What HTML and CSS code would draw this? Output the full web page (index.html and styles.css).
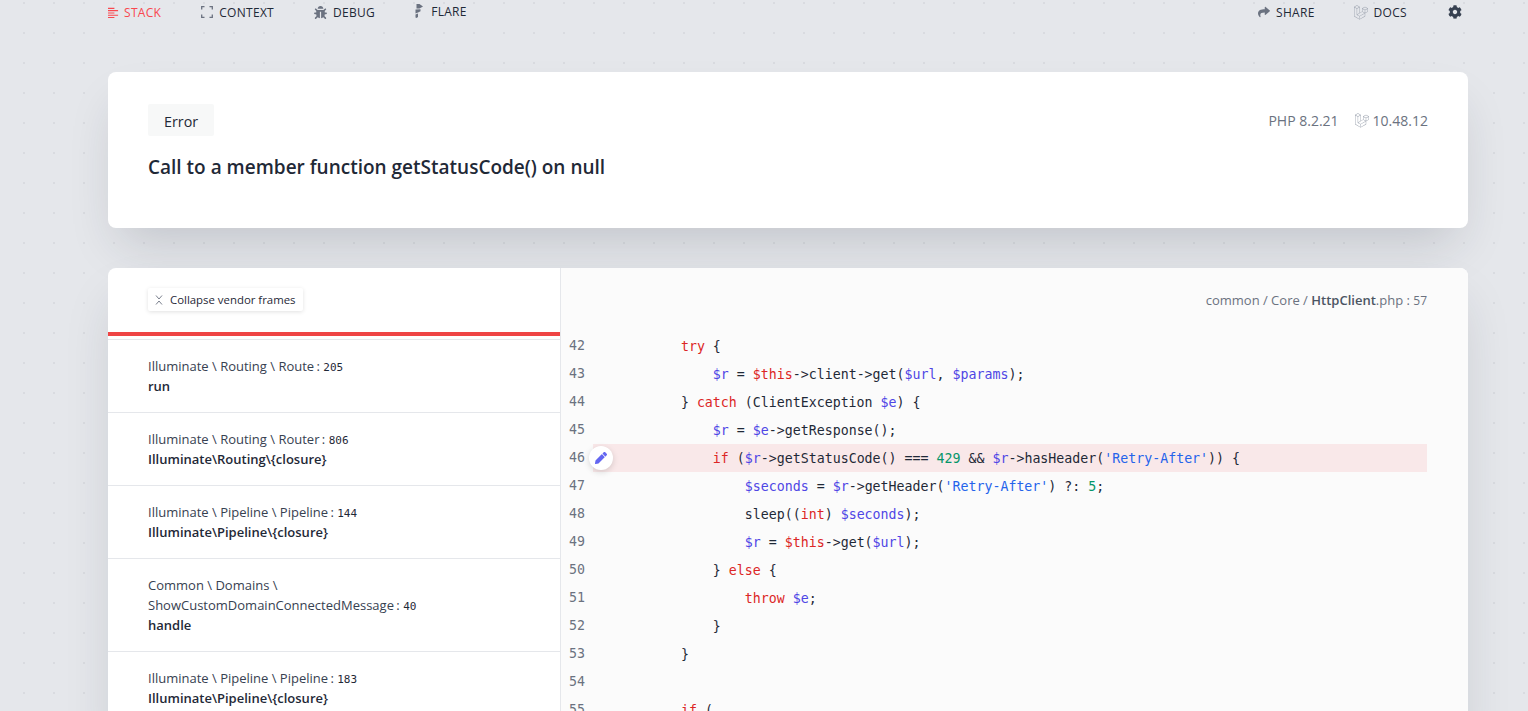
FILE: index.html
```html
<!DOCTYPE html>
<html lang="en">
<head>
<meta charset="utf-8">
<title>Error</title>
<link rel="stylesheet" href="styles.css">
</head>
<body>
<svg class="defs" width="0" height="0" aria-hidden="true"><defs><path id="laravel" fill="currentColor" d="M49.626 11.564a.809.809 0 0 1 .028.209v10.972a.8.8 0 0 1-.402.694l-9.209 5.302V39.25c0 .286-.152.55-.4.694L20.42 51.01c-.044.025-.092.041-.14.058-.018.006-.035.017-.054.022a.805.805 0 0 1-.41 0c-.022-.006-.042-.018-.063-.026-.044-.016-.09-.03-.132-.054L.402 39.944A.801.801 0 0 1 0 39.25V6.334c0-.072.01-.142.028-.21.006-.023.02-.044.028-.067.015-.042.029-.085.051-.124.015-.026.037-.047.055-.071.023-.032.044-.065.071-.093.023-.023.053-.04.079-.06.029-.024.055-.05.088-.069h.001l9.61-5.533a.802.802 0 0 1 .8 0l9.61 5.533h.002c.032.02.059.045.088.068.026.02.055.038.078.06.028.029.048.062.072.094.017.024.04.045.054.071.023.04.036.082.052.124.008.023.022.044.028.068a.809.809 0 0 1 .028.209v20.559l8.008-4.611v-10.51c0-.07.01-.141.028-.208.007-.024.02-.045.028-.068.016-.042.03-.085.052-.124.015-.026.037-.047.054-.071.024-.032.044-.065.072-.093.023-.023.052-.04.078-.06.03-.024.056-.05.088-.069h.001l9.611-5.533a.801.801 0 0 1 .8 0l9.61 5.533c.034.02.06.045.09.068.025.02.054.038.077.06.028.029.048.062.072.094.018.024.04.045.054.071.023.039.036.082.052.124.009.023.022.044.028.068zm-1.574 10.718v-9.124l-3.363 1.936-4.646 2.675v9.124l8.01-4.611zm-9.61 16.505v-9.13l-4.57 2.61-13.05 7.448v9.216l17.62-10.144zM1.602 7.719v31.068L19.22 48.93v-9.214l-9.204-5.209-.003-.002-.004-.002c-.031-.018-.057-.044-.086-.066-.025-.02-.054-.036-.076-.058l-.002-.003c-.026-.025-.044-.056-.066-.084-.02-.027-.044-.05-.06-.078l-.001-.003c-.018-.03-.029-.066-.042-.1-.013-.03-.03-.058-.038-.09v-.001c-.01-.038-.012-.078-.016-.117-.004-.03-.012-.06-.012-.09v-.002-21.481L4.965 9.654 1.602 7.72zm8.81-5.994L2.405 6.334l8.005 4.609 8.006-4.61-8.006-4.608zm4.164 28.764l4.645-2.674V7.719l-3.363 1.936-4.646 2.675v20.096l3.364-1.937zM39.243 7.164l-8.006 4.609 8.006 4.609 8.005-4.61-8.005-4.608zm-.801 10.605l-4.646-2.675-3.363-1.936v9.124l4.645 2.674 3.364 1.937v-9.124zM20.02 38.33l11.743-6.704 5.87-3.35-8-4.606-9.211 5.303-8.395 4.833 7.993 4.524z"/></defs></svg>
<nav class="nav">
  <div class="nav-group">
    <a class="nav-item nav-active"><svg class="ico" viewBox="0 0 12 12"><path d="M0 1.500h7M0 4h11M0 6.500h7M0 9h11M0 11.500h7" stroke="currentColor" stroke-width="1.200" fill="none"/></svg>STACK</a>
    <a class="nav-item"><svg class="ico ico-gray" viewBox="0 0 12 12"><path d="M.7 3.500V.7h2.800M8.500.7h2.800v2.800M11.300 8.500v2.800H8.500M3.500 11.300H.7V8.500" stroke="currentColor" stroke-width="1.300" fill="none"/></svg>CONTEXT</a>
    <a class="nav-item"><svg class="ico ico-gray ico-bug" viewBox="0 0 512 512"><path fill="currentColor" d="M511.988 288.9c-.478 17.43-15.217 31.1-32.653 31.1H424v16c0 21.864-4.882 42.584-13.6 61.145l60.228 60.228c12.496 12.497 12.496 32.758 0 45.255-12.498 12.497-32.759 12.496-45.256 0l-54.736-54.736C345.886 467.965 314.351 480 280 480V236c0-6.627-5.373-12-12-12h-24c-6.627 0-12 5.373-12 12v244c-34.351 0-65.886-12.035-90.636-32.108l-54.736 54.736c-12.498 12.497-32.759 12.496-45.256 0-12.496-12.497-12.496-32.758 0-45.255l60.228-60.228C92.882 378.584 88 357.864 88 336v-16H32.666C15.23 320 .491 306.33.013 288.9-.484 270.816 14.028 256 32 256h56v-58.745l-46.628-46.628c-12.496-12.497-12.496-32.758 0-45.255 12.498-12.497 32.758-12.497 45.256 0L141.255 160h229.489l54.627-54.627c12.498-12.497 32.758-12.497 45.256 0 12.496 12.497 12.496 32.758 0 45.255L424 197.255V256h56c17.972 0 32.484 14.816 31.988 32.9zM257 0c-61.856 0-112 50.144-112 112h224C369 50.144 318.856 0 257 0z"/></svg>DEBUG</a>
    <a class="nav-item nav-flare"><svg class="ico-flare" viewBox="0 0 8 14"><path fill="currentColor" d="M1.500 0 L4.500 0 L8 2.600 L4.500 4.600 L1.500 4.600 Z M.5 5.600 L5.500 5.300 L5.500 7.300 L3 8.600 L.5 9.500 Z M.5 10.400 L3 9.600 L3 13 L1.500 14 L.5 13.500 Z"/></svg>FLARE</a>
  </div>
  <div class="nav-group nav-right">
    <a class="nav-item"><svg class="ico ico-gray" viewBox="0 0 512 512"><path fill="currentColor" d="M503.691 189.836L327.687 37.851C312.281 24.546 288 35.347 288 56.015v80.053C127.371 137.907 0 170.1 0 322.326c0 61.441 39.581 122.309 83.333 154.132 13.653 9.931 33.111-2.533 28.077-18.631C66.066 312.814 132.917 274.316 288 272.085V360c0 20.7 24.3 31.453 39.687 18.164l176.004-152c11.071-9.562 11.086-26.753 0-36.328z"/></svg>SHARE</a>
    <a class="nav-item"><svg class="ico-lar" viewBox="0 0 50 52"><use href="#laravel"/></svg>DOCS</a>
    <a class="nav-item nav-cog"><svg class="ico-cog" viewBox="0 0 512 512"><path fill="currentColor" d="M487.4 315.7l-42.6-24.6c4.3-23.2 4.3-47 0-70.2l42.6-24.6c4.9-2.8 7.1-8.6 5.5-14-11.1-35.6-30-67.8-54.7-94.6-3.8-4.1-10-5.1-14.8-2.3L380.8 110c-17.9-15.4-38.5-27.3-60.8-35.1V25.8c0-5.6-3.9-10.5-9.4-11.7-36.7-8.2-74.3-7.8-109.2 0-5.5 1.2-9.4 6.1-9.4 11.7V75c-22.2 7.9-42.8 19.8-60.8 35.1L88.7 85.5c-4.9-2.8-11-1.9-14.8 2.3-24.7 26.7-43.6 58.9-54.7 94.6-1.7 5.4.6 11.2 5.5 14L67.3 221c-4.3 23.2-4.3 47 0 70.2l-42.6 24.6c-4.9 2.8-7.1 8.6-5.5 14 11.1 35.6 30 67.8 54.7 94.6 3.8 4.1 10 5.1 14.8 2.3l42.6-24.6c17.9 15.4 38.5 27.3 60.8 35.1v49.2c0 5.6 3.9 10.5 9.4 11.7 36.7 8.2 74.3 7.8 109.2 0 5.5-1.2 9.4-6.1 9.4-11.7v-49.2c22.2-7.900 42.800-19.800 60.800-35.100l42.600 24.600c4.900 2.800 11 1.900 14.800-2.300 24.700-26.700 43.600-58.900 54.700-94.600 1.500-5.500-.7-11.300-5.600-14.100zM256 336c-44.100 0-80-35.900-80-80s35.900-80 80-80 80 35.900 80 80-35.900 80-80 80z"/></svg></a>
  </div>
</nav>

<main class="main">
  <section class="card summary">
    <div class="summary-top">
      <span class="badge">Error</span>
      <div class="versions">
        <span>PHP 8.2.21</span>
        <span class="ver-lar"><svg class="ico-lar" viewBox="0 0 50 52"><use href="#laravel"/></svg>10.48.12</span>
      </div>
    </div>
    <h1 class="title">Call to a member function getStatusCode() on null</h1>
  </section>

  <section class="card stack">
    <aside class="frames">
      <div class="frames-head">
        <button class="collapse"><svg class="ico-collapse" viewBox="0 0 8 10"><path d="M1 .5 4 4 7 .5M1 9.500 4 6l3 3.500" fill="none" stroke="currentColor" stroke-width=".9"/></svg>Collapse vendor frames</button>
      </div>
      <div class="red-bar"></div>
      <div class="frame-list">
        <div class="frame"><div class="frame-cls">Illuminate \ Routing \ Route <span class="colon">:</span> <span class="ln">205</span></div><div class="frame-fn">run</div></div>
        <div class="frame"><div class="frame-cls">Illuminate \ Routing \ Router <span class="colon">:</span> <span class="ln">806</span></div><div class="frame-fn">Illuminate\Routing\{closure}</div></div>
        <div class="frame"><div class="frame-cls">Illuminate \ Pipeline \ Pipeline <span class="colon">:</span> <span class="ln">144</span></div><div class="frame-fn">Illuminate\Pipeline\{closure}</div></div>
        <div class="frame"><div class="frame-cls">Common \ Domains \<br>ShowCustomDomainConnectedMessage <span class="colon">:</span> <span class="ln">40</span></div><div class="frame-fn">handle</div></div>
        <div class="frame"><div class="frame-cls">Illuminate \ Pipeline \ Pipeline <span class="colon">:</span> <span class="ln">183</span></div><div class="frame-fn">Illuminate\Pipeline\{closure}</div></div>
      </div>
    </aside>
    <div class="source">
      <div class="path">common / Core / <b class="path-file">HttpClient</b>.php : <span class="path-ln">57</span></div>
      <div class="code">
<div class="row"><span class="num">42</span><code class="line">        <i class="k">try</i> {</code></div>
<div class="row"><span class="num">43</span><code class="line">            <i class="v">$r</i> = <i class="k">$this</i>-&gt;client-&gt;get(<i class="v">$url</i>, <i class="v">$params</i>);</code></div>
<div class="row"><span class="num">44</span><code class="line">        } <i class="k">catch</i> (ClientException <i class="v">$e</i>) {</code></div>
<div class="row"><span class="num">45</span><code class="line">            <i class="v">$r</i> = <i class="v">$e</i>-&gt;getResponse();</code></div>
<div class="row"><span class="num">46</span><code class="line line-hl">            <i class="k">if</i> (<i class="v">$r</i>-&gt;getStatusCode() === <i class="n">429</i> &amp;&amp; <i class="v">$r</i>-&gt;hasHeader(<i class="s">'Retry-After'</i>)) {</code><span class="edit"><svg class="ico-pencil" viewBox="0 0 512 512"><path fill="currentColor" d="M497.9 142.1l-46.1 46.1c-4.7 4.7-12.3 4.7-17 0l-111-111c-4.7-4.7-4.7-12.3 0-17l46.1-46.1c18.7-18.7 49.1-18.7 67.9 0l60.1 60.1c18.8 18.7 18.8 49.1 0 67.9zM284.2 99.8L21.6 362.4.4 483.9c-2.9 16.4 11.4 30.6 27.8 27.8l121.5-21.3 262.6-262.6c4.7-4.7 4.7-12.3 0-17l-111-111c-4.8-4.7-12.4-4.7-17.1 0z"/></svg></span></div>
<div class="row"><span class="num">47</span><code class="line">                <i class="v">$seconds</i> = <i class="v">$r</i>-&gt;getHeader(<i class="s">'Retry-After'</i>) ?: <i class="n">5</i>;</code></div>
<div class="row"><span class="num">48</span><code class="line">                sleep((<i class="k">int</i>) <i class="v">$seconds</i>);</code></div>
<div class="row"><span class="num">49</span><code class="line">                <i class="v">$r</i> = <i class="k">$this</i>-&gt;get(<i class="v">$url</i>);</code></div>
<div class="row"><span class="num">50</span><code class="line">            } <i class="k">else</i> {</code></div>
<div class="row"><span class="num">51</span><code class="line">                <i class="k">throw</i> <i class="v">$e</i>;</code></div>
<div class="row"><span class="num">52</span><code class="line">            }</code></div>
<div class="row"><span class="num">53</span><code class="line">        }</code></div>
<div class="row"><span class="num">54</span><code class="line"> </code></div>
<div class="row"><span class="num">55</span><code class="line">        <i class="k">if</i> (</code></div>
      </div>
    </div>
  </section>
</main>
</body>
</html>
```

FILE: styles.css
```css
* { box-sizing: border-box; }

html, body {
  margin: 0;
  height: 711px;
  overflow: hidden;
}

body {
  font-family: "Open Sans", "Noto Sans", sans-serif;
  color: #1f2937;
  background-color: #e5e7eb;
  background-image: radial-gradient(circle at 1px 1px, #d9dbe0 1px, transparent 1.2px);
  background-size: 30px 30px;
  background-position: 23px 2px;
}

.defs { position: absolute; }

.nav {
  display: flex;
  justify-content: space-between;
  height: 24px;
  padding: 0 66px 0 108px;
}

.nav-group {
  display: flex;
  align-items: center;
  gap: 40px;
}

.nav-right { gap: 39px; }

.nav-item {
  display: flex;
  align-items: center;
  gap: 6px;
  font-size: 12px;
  letter-spacing: 0.3px;
  color: #1f2937;
}

.nav-active { color: #f9484f; }
.nav-active .ico { margin-right: -1px; }
.nav-flare { margin-top: -2px; gap: 8px; margin-left: 0; }
.nav-cog { margin-left: 2px; }

.ico { width: 11px; height: 11px; flex: none; }
.ico-gray { color: #6b7280; width: 12px; height: 12px; }
.ico-bug { width: 13px; height: 13px; }
.ico-flare { color: #6b7280; width: 8px; height: 14px; flex: none; }
.ico-lar { width: 14px; height: 15px; color: #9ca3af; flex: none; }
.ico-cog { width: 14px; height: 14px; color: #374151; }

.main {
  padding: 48px 60px 0 108px;
}

.card {
  background: #fff;
  border-radius: 8px;
  box-shadow: 0 25px 50px -12px rgba(31, 41, 55, 0.18);
}

.summary {
  height: 156px;
  padding: 32px 40px;
}

.summary-top {
  display: flex;
  justify-content: space-between;
  align-items: flex-start;
}

.badge {
  display: block;
  height: 32px;
  padding: 0 16px;
  line-height: 35px;
  font-size: 14.300px;
  background: #f7f8f8;
  border-radius: 2px;
}

.versions {
  display: flex;
  align-items: center;
  gap: 16px;
  margin-top: 7px;
  font-size: 14px;
  color: #6b7280;
}

.ver-lar {
  display: flex;
  align-items: center;
  gap: 4px;
}

.title {
  margin: 18px 0 0;
  font-size: 19px;
  line-height: 26px;
  font-weight: 600;
}

.stack {
  display: flex;
  height: 480px;
  margin-top: 40px;
  border-radius: 8px 8px 0 0;
  overflow: hidden;
}

.frames {
  flex: none;
  width: 452px;
}

.frames-head {
  height: 64px;
  padding: 20px 0 0 40px;
}

.collapse {
  display: flex;
  align-items: center;
  gap: 7px;
  height: 23px;
  padding: 0 7px;
  border: 0;
  border-radius: 2px;
  background: #fff;
  color: #1f2937;
  font: inherit;
  font-size: 11.400px;
  box-shadow: 0 1px 4px rgba(0, 0, 0, 0.12);
}

.ico-collapse { width: 8px; height: 10px; color: #6b7280; }

.red-bar {
  height: 4px;
  background: #ef4444;
}

.frame-list { border-top: 3px solid #fff; }

.frame {
  padding: 16px 40px;
  border-top: 1px solid #e5e7eb;
  font-size: 13px;
  line-height: 20px;
}

.frame-cls { color: #374151; }
.colon { margin-left: -1px; }

.ln {
  font-family: "DejaVu Sans Mono", monospace;
  font-size: 11px;
  line-height: 1;
  color: #1f2937;
}

.frame-fn { font-weight: 600; color: #1f2937; }

.source {
  flex: 1;
  min-width: 0;
  background: #fbfbfb;
  border-left: 1px solid #e5e7eb;
}

.path {
  height: 64px;
  padding: 22px 41px 0 0;
  text-align: right;
  font-size: 13px;
  line-height: 20px;
  color: #6b7280;
}

.path-file { font-weight: 600; color: #4b5563; }
.path-ln { font-size: 12px; }

.code { padding-right: 41px; }

.row {
  position: relative;
  display: flex;
  height: 28px;
}

.num {
  flex: none;
  width: 32px;
  padding-left: 8px;
  font-family: "DejaVu Sans Mono", monospace;
  font-size: 13.280px;
  line-height: 27px;
  color: #6b7280;
}

.line {
  flex: 1;
  padding-left: 24px;
  line-height: 29px;
  white-space: pre;
  font-family: "DejaVu Sans Mono", monospace;
  font-size: 13.280px;
  color: #1f2937;
}

.line-hl { background: #f9e8e9; }

.line i { font-style: normal; }
.k { color: #dc2626; }
.v { color: #4f46e5; }
.n { color: #059669; }
.s { color: #2563eb; }

.edit {
  position: absolute;
  left: 28px;
  top: 2px;
  width: 24px;
  height: 24px;
  display: flex;
  align-items: center;
  justify-content: center;
  border-radius: 50%;
  background: #fff;
  color: #6366f1;
  box-shadow: 0 2px 6px rgba(0, 0, 0, 0.15);
}

.ico-pencil { width: 12px; height: 12px; }
```
